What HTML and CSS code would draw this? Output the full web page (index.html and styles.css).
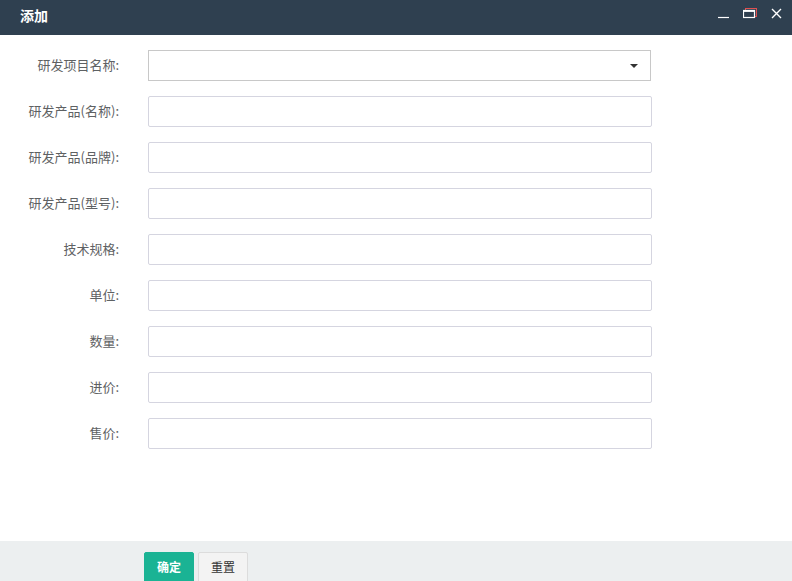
FILE: index.html
```html
<!DOCTYPE html>
<html>
<head>
<meta charset="utf-8">
<link rel="stylesheet" href="styles.css">
</head>
<body>
<div class="dialog">
  <div class="titlebar">
    <span class="title">添加</span>
    <div class="ctrls">
      <svg class="ic-min" width="12" height="12" viewBox="0 0 12 12"><path d="M0 10.5h11" stroke="#fff" stroke-width="1.2"/></svg>
      <svg class="ic-max" width="15" height="12" viewBox="0 0 15 12"><rect x="2.5" y="1.5" width="11" height="8" fill="none" stroke="#e05050" stroke-width="1"/><rect x="0.5" y="3.5" width="11" height="7" fill="#2f4050" stroke="#fff" stroke-width="1.2"/><path d="M0.5 4.2h11" stroke="#fff" stroke-width="1.4"/></svg>
      <svg class="ic-close" width="11" height="11" viewBox="0 0 11 11"><path d="M1 1l9 9M10 1l-9 9" stroke="#fff" stroke-width="1.4"/></svg>
    </div>
  </div>
  <div class="body">
    <div class="row"><label>研发项目名称:</label><div class="select"><span class="caret"></span></div></div>
    <div class="row"><label>研发产品(名称):</label><input class="inp" type="text"></div>
    <div class="row"><label>研发产品(品牌):</label><input class="inp" type="text"></div>
    <div class="row"><label>研发产品(型号):</label><input class="inp" type="text"></div>
    <div class="row"><label>技术规格:</label><input class="inp" type="text"></div>
    <div class="row"><label>单位:</label><input class="inp" type="text"></div>
    <div class="row"><label>数量:</label><input class="inp" type="text"></div>
    <div class="row"><label>进价:</label><input class="inp" type="text"></div>
    <div class="row"><label>售价:</label><input class="inp" type="text"></div>
  </div>
  <div class="footer">
    <button class="btn btn-ok">确定</button>
    <button class="btn btn-reset">重置</button>
  </div>
</div>
</body>
</html>
```
FILE: styles.css
```css
html, body {
  margin: 0;
  padding: 0;
  background: #fff;
  font-family: "Noto Sans CJK SC", "Noto Sans", sans-serif;
  font-size: 13px;
  color: #676a6c;
}
.dialog {
  width: 792px;
  height: 581px;
  display: flex;
  flex-direction: column;
  overflow: hidden;
}
.titlebar {
  height: 35px;
  flex: none;
  background: #2f4050;
  display: flex;
  align-items: flex-start;
  justify-content: space-between;
}
.title {
  color: #fff;
  font-size: 14px;
  font-weight: bold;
  margin-left: 20px;
  line-height: 20px;
  margin-top: 5px;
}
.ctrls {
  display: flex;
  align-items: flex-start;
  margin-right: 10px;
  margin-top: 7px;
}
.ic-min { margin-right: 13px; }
.ic-max { margin-right: 13px; margin-top: 0; }
.ic-close { margin-top: 1px; }
.body {
  flex: 1;
  padding-top: 15px;
}
.row {
  display: flex;
  align-items: center;
  height: 31px;
  margin-bottom: 15px;
}
.row label {
  width: 119px;
  text-align: right;
  margin-right: 29px;
  margin-top: -2px;
  color: #5e6163;
  font-size: 13px;
}
.select {
  width: 501px;
  height: 29px;
  border: 1px solid #c8c8c8;
  background: #fff;
  position: relative;
}
.caret {
  position: absolute;
  right: 12px;
  top: 13px;
  width: 0;
  height: 0;
  border-left: 4px solid transparent;
  border-right: 4px solid transparent;
  border-top: 4px solid #333;
}
.inp {
  box-sizing: border-box;
  width: 504px;
  height: 31px;
  border: 1px solid #d5d5e0;
  border-radius: 2px;
  margin: 0;
  padding: 0 10px;
  outline: none;
  background: #fff;
}
.footer {
  height: 40px;
  flex: none;
  background: #eceff0;
  display: flex;
  align-items: flex-start;
  padding-left: 144px;
  padding-top: 11px;
  box-sizing: border-box;
  gap: 4px;
}
.btn {
  width: 50px;
  height: 32px;
  font-family: "Noto Sans CJK SC", sans-serif;
  font-size: 12px;
  border-radius: 2px;
  padding: 0 0 2px 0;
  margin: 0;
  line-height: 26px;
}
.btn-ok {
  background: #1ab394;
  border: 1px solid #1ab394;
  color: #fff;
  font-weight: bold;
}
.btn-reset {
  background: #f3f3f3;
  border: 1px solid #dcdcdc;
  color: #333;
}
```
